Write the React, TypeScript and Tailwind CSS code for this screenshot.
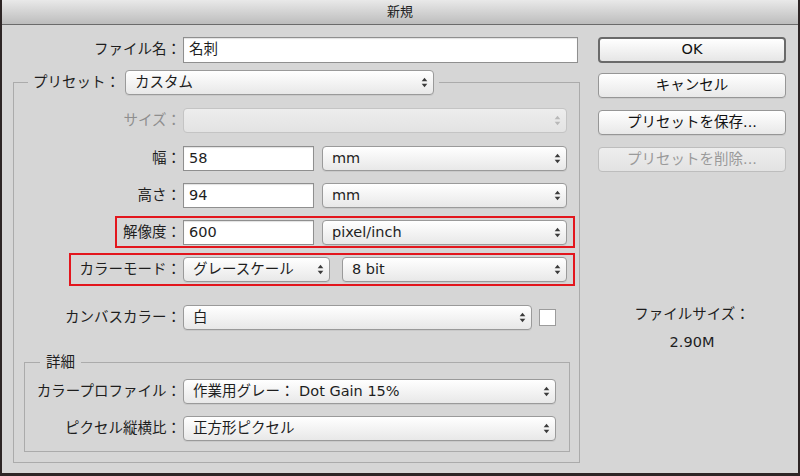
import React from "react";

function Arrows({ disabled }: { disabled?: boolean }) {
  const c = disabled ? "#b8b8b8" : "#3a3a3a";
  return (
    <svg width="7" height="11" viewBox="0 0 7 11" className="shrink-0">
      <path d="M3.5 0.8 L6.3 4.2 L0.7 4.2 Z" fill={c} />
      <path d="M0.7 6.8 L6.3 6.8 L3.5 10.2 Z" fill={c} />
    </svg>
  );
}

function Select({ w, text, disabled }: { w: string; text: string; disabled?: boolean }) {
  return (
    <div
      className={`${w} h-[25px] shrink-0 flex items-center justify-between rounded-[4px] border pl-[9px] pr-[5px] ${
        disabled
          ? "border-[#c4c4c4] bg-linear-to-b from-[#ededed] to-[#e3e3e3]"
          : "border-[#9a9a9a] bg-linear-to-b from-[#ffffff] to-[#e8e8e8] shadow-[0_1px_0_rgba(0,0,0,0.06)]"
      }`}
    >
      <span className="whitespace-nowrap leading-[23px]">{text}</span>
      <Arrows disabled={disabled} />
    </div>
  );
}

function TextBox({ w, text, h }: { w: string; text: string; h?: string }) {
  return (
    <div
      className={`${w} ${h ?? "h-[25px]"} shrink-0 flex items-center bg-white border border-[#8f8f8f] shadow-[inset_0_1px_1px_rgba(0,0,0,0.12)] pl-[5px]`}
    >
      <span className="whitespace-nowrap">{text}</span>
    </div>
  );
}

function Button({ text, primary, disabled }: { text: string; primary?: boolean; disabled?: boolean }) {
  return (
    <div
      className={`w-[188px] flex items-center justify-center rounded-[4px] ${
        primary
          ? "h-[26px] border-2 border-[#6a6a6a] bg-linear-to-b from-[#ffffff] to-[#e6e6e6] text-[#111]"
          : disabled
          ? "h-[25px] border border-[#bdbdbd] bg-linear-to-b from-[#eeeeee] to-[#e2e2e2] text-[#9a9a9a]"
          : "h-[25px] border border-[#969696] bg-linear-to-b from-[#ffffff] to-[#e8e8e8] text-[#111] shadow-[0_1px_0_rgba(0,0,0,0.06)]"
      }`}
    >
      {text}
    </div>
  );
}

export default function App() {
  return (
    <div className="w-[800px] h-[476px] flex flex-col border-x-2 border-b-[3px] border-[#2d2525] bg-[#d6d6d6] text-[14.5px] text-[#1e1e1e] font-['DejaVu_Sans','Noto_Sans_CJK_JP',sans-serif]">
      {/* title bar */}
      <div className="h-[25px] shrink-0 flex items-center justify-center bg-linear-to-b from-[#e9e9e9] to-[#bdbdbd] border-b border-[#6b6b6b] text-[13px] text-[#222]">
        新規
      </div>

      <div className="flex flex-1">
        {/* left column */}
        <div className="w-[596px] shrink-0 flex flex-col">
          {/* file name */}
          <div className="mt-[12px] flex items-center">
            <div className="w-[179px] text-right whitespace-nowrap">ファイル名：</div>
            <div className="ml-[2px]">
              <TextBox w="w-[395px]" h="h-[26px]" text="名刺" />
            </div>
          </div>

          {/* preset fieldset */}
          <fieldset className="ml-[11px] mt-[7px] w-[567px] border border-[#ababab] pb-[10px]">
            <legend className="ml-[14px] px-[5px]">
              <div className="flex items-center h-[25px]">
                <span className="whitespace-nowrap">プリセット：</span>
                <div className="ml-[5px]">
                  <Select w="w-[309px]" text="カスタム" />
                </div>
              </div>
            </legend>

            <div className="mt-[13px] flex items-center h-[25px]">
              <div className="w-[167px] text-right whitespace-nowrap text-[#8e8e8e]">サイズ：</div>
              <div className="ml-[2px]">
                <Select w="w-[384px]" text="" disabled />
              </div>
            </div>

            <div className="mt-[13px] flex items-center h-[25px]">
              <div className="w-[167px] text-right whitespace-nowrap">幅：</div>
              <div className="ml-[2px] flex items-center gap-[8px]">
                <TextBox w="w-[131px]" text="58" />
                <Select w="w-[245px]" text="mm" />
              </div>
            </div>

            <div className="mt-[12px] flex items-center h-[25px]">
              <div className="w-[167px] text-right whitespace-nowrap">高さ：</div>
              <div className="ml-[2px] flex items-center gap-[8px]">
                <TextBox w="w-[131px]" text="94" />
                <Select w="w-[245px]" text="mm" />
              </div>
            </div>

            <div className="relative mt-[12px] flex items-center h-[25px]">
              <div className="w-[167px] text-right whitespace-nowrap">解像度：</div>
              <div className="ml-[2px] flex items-center gap-[8px]">
                <TextBox w="w-[131px]" text="600" />
                <Select w="w-[245px]" text="pixel/inch" />
              </div>
              <div className="absolute left-[101px] top-[-4px] w-[460px] h-[32px] border-2 border-[#e3161d] pointer-events-none" />
            </div>

            <div className="relative mt-[12px] flex items-center h-[25px]">
              <div className="w-[167px] text-right whitespace-nowrap">カラーモード：</div>
              <div className="ml-[2px] flex items-center gap-[12px]">
                <Select w="w-[147px]" text="グレースケール" />
                <Select w="w-[225px]" text="8 bit" />
              </div>
              <div className="absolute left-[55px] top-[-4px] w-[506px] h-[33px] border-2 border-[#e3161d] pointer-events-none" />
            </div>

            <div className="mt-[23px] flex items-center h-[25px]">
              <div className="w-[167px] text-right whitespace-nowrap">カンバスカラー：</div>
              <div className="ml-[2px] flex items-center gap-[7px]">
                <Select w="w-[349px]" text="白" />
                <div className="w-[17px] h-[17px] bg-white border border-[#9c9c9c]" />
              </div>
            </div>

            {/* advanced fieldset */}
            <fieldset className="ml-[10px] mt-[23px] w-[546px] border border-[#ababab] pb-[10px]">
              <legend className="ml-[15px] px-[6px] leading-[18px]">詳細</legend>

              <div className="mt-[8px] flex items-center h-[25px]">
                <div className="w-[156px] text-right whitespace-nowrap">カラープロファイル：</div>
                <div className="ml-[2px]">
                  <Select w="w-[373px]" text="作業用グレー： Dot Gain 15%" />
                </div>
              </div>

              <div className="mt-[12px] flex items-center h-[25px]">
                <div className="w-[156px] text-right whitespace-nowrap">ピクセル縦横比：</div>
                <div className="ml-[2px]">
                  <Select w="w-[373px]" text="正方形ピクセル" />
                </div>
              </div>
            </fieldset>
          </fieldset>
        </div>

        {/* right column */}
        <div className="w-[188px] shrink-0 flex flex-col">
          <div className="mt-[12px]">
            <Button text="OK" primary />
          </div>
          <div className="mt-[10px]">
            <Button text="キャンセル" />
          </div>
          <div className="mt-[12px]">
            <Button text="プリセットを保存..." />
          </div>
          <div className="mt-[12px]">
            <Button text="プリセットを削除..." disabled />
          </div>
          <div className="mt-[128px] flex flex-col items-center leading-[28px]">
            <div className="whitespace-nowrap">ファイルサイズ：</div>
            <div>2.90M</div>
          </div>
        </div>
      </div>
    </div>
  );
}
